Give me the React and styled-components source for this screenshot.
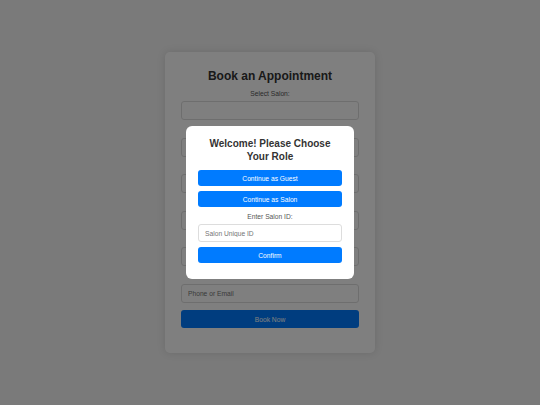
import React, { useState } from 'react'
import styled, { createGlobalStyle } from 'styled-components'

const GlobalStyle = createGlobalStyle`
    html, body {
        margin: 0;
        padding: 0;
    }
    body {
        background: #f4f4f4;
        font-family: "Liberation Sans", Arial, sans-serif;
    }
`

const fields = [
    { label: 'Select Salon:', placeholder: '' },
    { label: 'Select Service:', placeholder: '' },
    { label: 'Select Date:', placeholder: '' },
    { label: 'Select Time:', placeholder: '' },
    { label: 'Your Name:', placeholder: 'Name' },
    { label: 'Contact:', placeholder: 'Phone or Email' },
]

export default function App() {
    const [salonId, setSalonId] = useState('')

    return (
        <Page>
            <GlobalStyle />
            <Card>
                <Title>Book an Appointment</Title>
                {fields.map(f => (
                    <Field key={f.label}>
                        <Label>{f.label}</Label>
                        <Input type="text" placeholder={f.placeholder} />
                    </Field>
                ))}
                <BookButton type="button">Book Now</BookButton>
            </Card>

            <Overlay>
                <Modal>
                    <ModalTitle>Welcome! Please Choose Your Role</ModalTitle>
                    <RoleButton type="button">Continue as Guest</RoleButton>
                    <RoleButton type="button">Continue as Salon</RoleButton>
                    <ModalLabel>Enter Salon ID:</ModalLabel>
                    <ModalInput
                        type="text"
                        placeholder="Salon Unique ID"
                        value={salonId}
                        onChange={e => setSalonId(e.target.value)}
                    />
                    <RoleButton type="button" $last>Confirm</RoleButton>
                </Modal>
            </Overlay>
        </Page>
    )
}

const Page = styled.div`
    min-height: 100vh;
    display: flex;
    align-items: center;
    justify-content: center;
`

const Card = styled.div`
    width: 178px;
    padding: 16px 16px 25px;
    background: #fff;
    border-radius: 5px;
    box-shadow: 0 0 8px rgba(0, 0, 0, 0.12);
    display: flex;
    flex-direction: column;
`

const Title = styled.h2`
    margin: 1px 0 6px;
    font-size: 12px;
    line-height: 14px;
    font-weight: bold;
    color: #333;
    text-align: center;
`

const Field = styled.div`
    display: flex;
    flex-direction: column;
    margin-bottom: 5.5px;
`

const Label = styled.label`
    font-size: 6.7px;
    line-height: 10px;
    color: #555;
    text-align: center;
    margin-bottom: 2px;
`

const Input = styled.input`
    box-sizing: border-box;
    height: 19px;
    width: 100%;
    padding: 0 6px;
    border: 1px solid #ddd;
    border-radius: 3px;
    font-family: inherit;
    font-size: 6.7px;
    color: #333;
    outline: none;
    &::placeholder {
        color: #757575;
    }
`

const BookButton = styled.button`
    margin-top: 2px;
    height: 18px;
    border: none;
    border-radius: 3px;
    background: #007bff;
    color: #fff;
    font-family: inherit;
    font-size: 6.7px;
    cursor: pointer;
`

const Overlay = styled.div`
    position: fixed;
    inset: 0;
    background: rgba(0, 0, 0, 0.5);
    display: flex;
    align-items: center;
    justify-content: center;
`

const Modal = styled.div`
    width: 144px;
    padding: 11px 12px 16px;
    background: #fff;
    border-radius: 6px;
    display: flex;
    flex-direction: column;
`

const ModalTitle = styled.h2`
    margin: 0 0 7px;
    font-size: 10px;
    line-height: 13px;
    font-weight: bold;
    color: #333;
    text-align: center;
`

const RoleButton = styled.button`
    height: 16px;
    margin-bottom: ${props => (props.$last ? '0' : '5px')};
    border: none;
    border-radius: 3px;
    background: #007bff;
    color: #fff;
    font-family: inherit;
    font-size: 6.7px;
    cursor: pointer;
`

const ModalLabel = styled.label`
    margin: 0 0 2px;
    font-size: 6.7px;
    line-height: 10px;
    color: #555;
    text-align: center;
`

const ModalInput = styled(Input)`
    height: 18px;
    margin-bottom: 5px;
`
